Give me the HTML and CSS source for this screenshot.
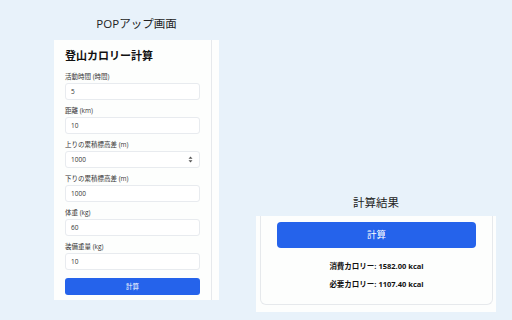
FILE: index.html
```html
<!DOCTYPE html>
<html lang="ja">
<head>
<meta charset="utf-8">
<link rel="stylesheet" href="styles.css">
</head>
<body>
<div class="stage">
  <section class="col col-left">
    <h2 class="caption">POPアップ画面</h2>
    <div class="popup">
      <div class="popup-body">
        <h1 class="title">登山カロリー計算</h1>
        <label class="label">活動時間 (時間)</label>
        <div class="input">5</div>
        <label class="label">距離 (km)</label>
        <div class="input">10</div>
        <label class="label">上りの累積標高差 (m)</label>
        <div class="input">1000
          <svg class="spin" width="5" height="7" viewBox="0 0 5 7"><path d="M2.5 0.5 L4.5 2.8 L0.5 2.8 Z M2.5 6.5 L4.5 4.2 L0.5 4.2 Z" fill="#555"/></svg>
        </div>
        <label class="label">下りの累積標高差 (m)</label>
        <div class="input">1000</div>
        <label class="label">体重 (kg)</label>
        <div class="input">60</div>
        <label class="label">装備重量 (kg)</label>
        <div class="input">10</div>
        <div class="btn btn-small">計算</div>
      </div>
      <div class="scrollbar"></div>
    </div>
  </section>
  <section class="col col-right">
    <h2 class="caption">計算結果</h2>
    <div class="result-panel">
      <div class="card">
        <div class="btn btn-large">計算</div>
        <p class="result first">消費カロリー: 1582.00 kcal</p>
        <p class="result">必要カロリー: 1107.40 kcal</p>
      </div>
    </div>
  </section>
</div>
</body>
</html>
```
FILE: styles.css
```css
html, body {
  margin: 0;
  padding: 0;
  width: 512px;
  height: 320px;
  overflow: hidden;
  background: #e8f2fa;
  font-family: "Open Sans", "Noto Sans CJK JP", sans-serif;
  color: #1f2328;
}
.stage {
  display: flex;
  align-items: flex-start;
  padding-left: 54px;
  gap: 37px;
}
.col {
  display: flex;
  flex-direction: column;
}
.col-left {
  width: 165px;
  padding-top: 16px;
}
.col-right {
  width: 240px;
  padding-top: 195px;
}
.caption {
  margin: 0 0 8px;
  font-size: 11.5px;
  line-height: 16px;
  font-weight: 400;
  text-align: center;
  color: #222;
}
.col-right .caption {
  margin-bottom: 5px;
}
.popup {
  display: flex;
  background: #fdfefd;
  height: 260px;
}
.popup-body {
  flex: 1;
  padding: 9px 11px 4px 11px;
  display: flex;
  flex-direction: column;
}
.scrollbar {
  width: 7px;
  border-left: 1px solid #e6e9ec;
}
.title {
  margin: 0 0 9px;
  font-size: 11px;
  line-height: 14px;
  font-weight: 700;
  color: #111;
}
.label {
  font-size: 6.5px;
  line-height: 9px;
  color: #333;
  margin-bottom: 2px;
}
.input {
  position: relative;
  height: 17px;
  box-sizing: border-box;
  border: 1px solid #e8ebef;
  border-radius: 3px;
  padding-left: 5px;
  font-size: 6.5px;
  line-height: 15px;
  color: #333;
  margin-bottom: 6px;
  background: #fff;
}
.spin {
  position: absolute;
  right: 6px;
  top: 4px;
}
.btn {
  background: #2563eb;
  color: #fff;
  text-align: center;
  border-radius: 3px;
}
.btn-small {
  margin-top: 2px;
  height: 17px;
  font-size: 6.5px;
  line-height: 17px;
}
.result-panel {
  background: #fdfefd;
  height: 96px;
  box-sizing: border-box;
  padding: 0 3px 7px 4px;
  display: flex;
  flex-direction: column;
}
.card {
  flex: 1;
  border: 1px solid #e6e9ec;
  border-top: none;
  border-radius: 0 0 6px 6px;
  padding: 6px 16px 0;
}
.btn-large {
  height: 26px;
  font-size: 9.5px;
  line-height: 26px;
  border-radius: 4px;
}
.result {
  margin: 8px 0 0;
  font-size: 7.5px;
  line-height: 10px;
  font-weight: 700;
  text-align: center;
  color: #111;
}
.result.first {
  margin-top: 13px;
}
```
